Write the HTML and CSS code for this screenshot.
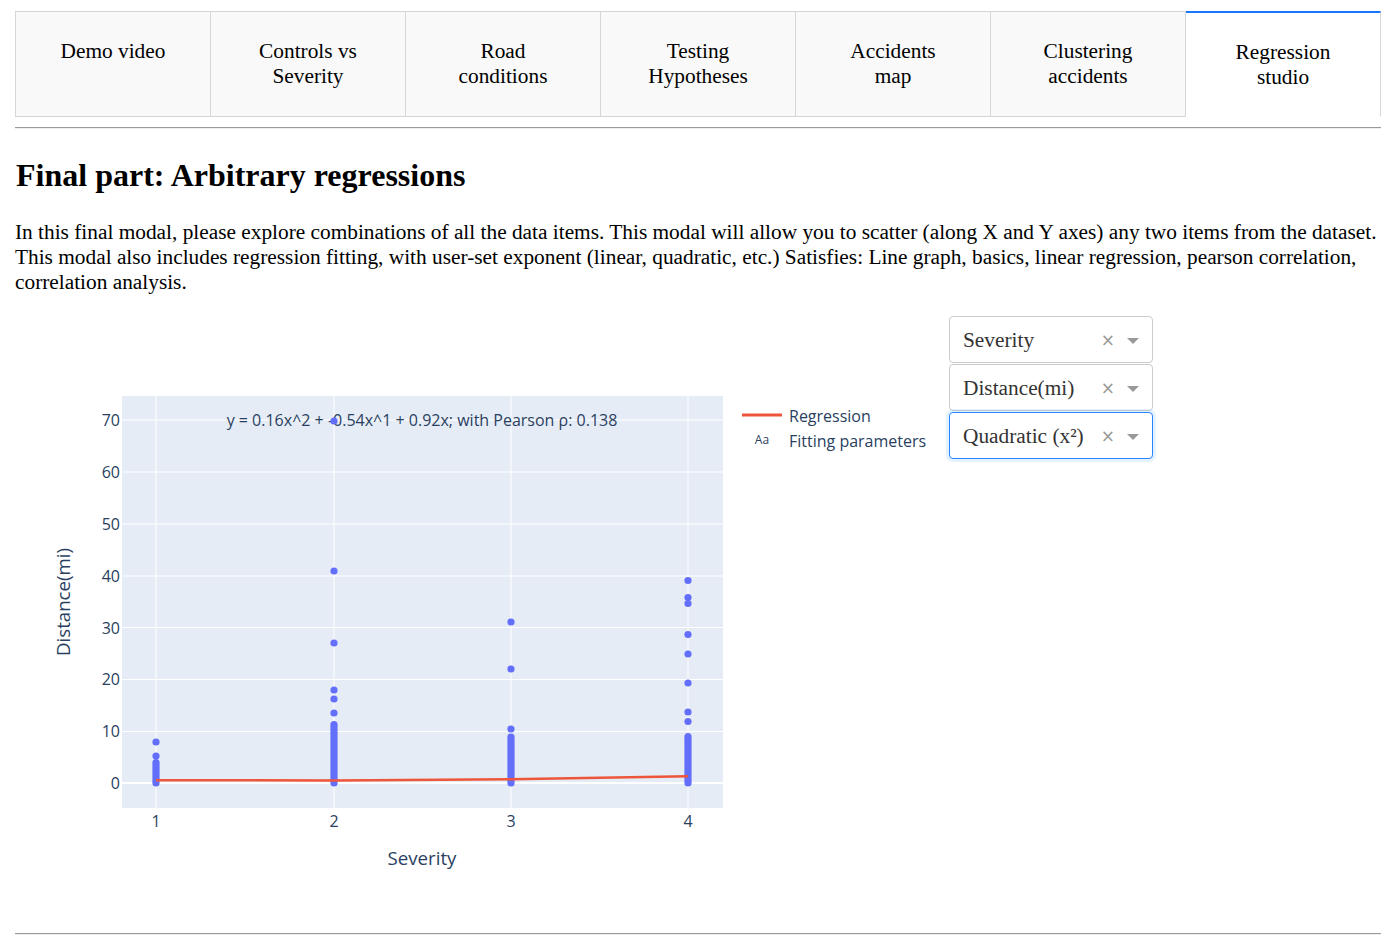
FILE: index.html
```html
<!DOCTYPE html>
<html>
<head>
<meta charset="utf-8">
<title>Regression studio</title>
<link rel="stylesheet" href="styles.css">
</head>
<body>
<div class="page">
  <div class="tabs">
    <div class="tab">Demo video</div>
    <div class="tab">Controls vs Severity</div>
    <div class="tab">Road conditions</div>
    <div class="tab">Testing Hypotheses</div>
    <div class="tab">Accidents map</div>
    <div class="tab">Clustering accidents</div>
    <div class="tab tab-selected">Regression studio</div>
  </div>
  <hr class="rule">
  <h2 class="title">Final part: Arbitrary regressions</h2>
  <p class="intro">In this final modal, please explore combinations of all the data items. This modal will allow you to scatter (along X and Y axes) any two items from the dataset. This modal also includes regression fitting, with user-set exponent (linear, quadratic, etc.) Satisfies: Line graph, basics, linear regression, pearson correlation, correlation analysis.</p>
  <div class="studio">
    <svg class="chart" width="934" height="606" viewBox="0 0 934 606" xmlns="http://www.w3.org/2000/svg">
      <rect x="107" y="80" width="601" height="412" fill="#e5ecf6"/>
      <g stroke="#ffffff" stroke-width="1">
        <line x1="107" x2="708" y1="104" y2="104"/>
        <line x1="107" x2="708" y1="156" y2="156"/>
        <line x1="107" x2="708" y1="208" y2="208"/>
        <line x1="107" x2="708" y1="260" y2="260"/>
        <line x1="107" x2="708" y1="311.5" y2="311.5"/>
        <line x1="107" x2="708" y1="363.5" y2="363.5"/>
        <line x1="107" x2="708" y1="415.5" y2="415.5"/>
        <line x1="141" x2="141" y1="80" y2="492"/>
        <line x1="319" x2="319" y1="80" y2="492"/>
        <line x1="496" x2="496" y1="80" y2="492"/>
        <line x1="673" x2="673" y1="80" y2="492"/>
      </g>
      <line x1="107" x2="708" y1="467" y2="467" stroke="#ffffff" stroke-width="2"/>
      <g class="ticks" text-anchor="end">
        <text x="105" y="104" dy="0.35em">70</text>
        <text x="105" y="156" dy="0.35em">60</text>
        <text x="105" y="208" dy="0.35em">50</text>
        <text x="105" y="260" dy="0.35em">40</text>
        <text x="105" y="312" dy="0.35em">30</text>
        <text x="105" y="363" dy="0.35em">20</text>
        <text x="105" y="415" dy="0.35em">10</text>
        <text x="105" y="467" dy="0.35em">0</text>
      </g>
      <g class="ticks" text-anchor="middle">
        <text x="141" y="505" dy="0.35em">1</text>
        <text x="319" y="505" dy="0.35em">2</text>
        <text x="496" y="505" dy="0.35em">3</text>
        <text x="673" y="505" dy="0.35em">4</text>
      </g>
      <text class="axis-title" x="407" y="542" dy="0.35em" text-anchor="middle">Severity</text>
      <text class="axis-title" x="48" y="286" dy="0.35em" text-anchor="middle" transform="rotate(-90 48 286)">Distance(mi)</text>
      <text class="annot" x="407" y="104" dy="0.35em" text-anchor="middle">y = 0.16x^2 + -0.54x^1 + 0.92x; with Pearson ρ: 0.138</text>
      <g stroke="#636efa" stroke-width="7.2" stroke-linecap="round">
        <line x1="141" x2="141" y1="446.5" y2="467"/>
        <line x1="319" x2="319" y1="408.5" y2="467"/>
        <line x1="496" x2="496" y1="421" y2="467"/>
        <line x1="673" x2="673" y1="420.5" y2="467"/>
      </g>
      <g fill="#636efa">
        <circle cx="141" cy="426" r="3.6"/>
        <circle cx="141" cy="440" r="3.6"/>
        <circle cx="319" cy="105" r="3.6"/>
        <circle cx="319" cy="255" r="3.6"/>
        <circle cx="319" cy="327" r="3.6"/>
        <circle cx="319" cy="374" r="3.6"/>
        <circle cx="319" cy="383" r="3.6"/>
        <circle cx="319" cy="397" r="3.6"/>
        <circle cx="496" cy="306" r="3.6"/>
        <circle cx="496" cy="353" r="3.6"/>
        <circle cx="496" cy="413" r="3.6"/>
        <circle cx="673" cy="264.5" r="3.6"/>
        <circle cx="673" cy="281.5" r="3.6"/>
        <circle cx="673" cy="287.5" r="3.6"/>
        <circle cx="673" cy="318.5" r="3.6"/>
        <circle cx="673" cy="338" r="3.6"/>
        <circle cx="673" cy="367" r="3.6"/>
        <circle cx="673" cy="396" r="3.6"/>
        <circle cx="673" cy="405.5" r="3.6"/>
      </g>
      <polyline points="141,464.2 319,464.5 496,463.2 673,460.2" fill="none" stroke="#ef553b" stroke-width="2.5"/>
      <line x1="727" x2="767" y1="99" y2="99" stroke="#ef553b" stroke-width="3"/>
      <text class="legend" x="774" y="100" dy="0.35em">Regression</text>
      <text class="legend-aa" x="747" y="124" dy="0.35em" text-anchor="middle">Aa</text>
      <text class="legend" x="774" y="125" dy="0.35em">Fitting parameters</text>
    </svg>
    <div class="controls">
      <div class="select">
        <span class="select-value">Severity</span>
        <span class="select-clear">×</span>
        <span class="select-arrow"></span>
      </div>
      <div class="select">
        <span class="select-value">Distance(mi)</span>
        <span class="select-clear">×</span>
        <span class="select-arrow"></span>
      </div>
      <div class="select select-focused">
        <span class="select-value">Quadratic (x²)</span>
        <span class="select-clear">×</span>
        <span class="select-arrow"></span>
      </div>
    </div>
  </div>
  <hr class="rule rule-bottom">
</div>
</body>
</html>
```

FILE: styles.css
```css
html, body {
  margin: 0;
  padding: 0;
  background: #ffffff;
}

.page {
  padding: 11px 15px 0;
  font-family: "Liberation Serif", "Times New Roman", serif;
  font-size: 21.34px;
  line-height: 25px;
  color: #000000;
}

.tabs {
  display: flex;
}

.tab {
  flex: 1 1 0;
  box-sizing: border-box;
  padding: 27px 35px 26px;
  text-align: center;
  background: #f9f9f9;
  border: 1px solid #d6d6d6;
  border-left: none;
  min-height: 106px;
}

.tab:first-child {
  border-left: 1px solid #d6d6d6;
}

.tab-selected {
  background: #ffffff;
  border-top: 2px solid #1975fa;
  border-bottom: 1px solid #ffffff;
}

.rule {
  margin: 10px 0 0;
  border: 0;
  border-top: 1px solid #9a9a9a;
  border-bottom: 1px solid #eeeeee;
  height: 0;
}

.title {
  font-size: 32px;
  line-height: 36px;
  font-weight: bold;
  margin: 28px 0 0 1px;
}

.intro {
  margin: 27px 0 0;
}

.studio {
  display: flex;
  align-items: flex-start;
  margin-top: 21px;
}

.chart {
  display: block;
  flex: none;
  font-family: "Open Sans", "DejaVu Sans", sans-serif;
}

.ticks {
  font-size: 16px;
  fill: #2a3f5f;
}

.axis-title {
  font-size: 18.67px;
  fill: #2a3f5f;
}

.annot {
  font-size: 16px;
  fill: #2a3f5f;
}

.legend {
  font-size: 16px;
  fill: #2a3f5f;
}

.legend-aa {
  font-size: 12px;
  fill: #2a3f5f;
}

.controls {
  width: 204px;
  display: flex;
  flex-direction: column;
  gap: 1px;
}

.select {
  box-sizing: border-box;
  height: 47px;
  display: flex;
  align-items: center;
  padding: 2px 13px 0 13px;
  border: 1px solid #cccccc;
  border-radius: 4px;
  background: #ffffff;
  color: #333333;
}

.select-focused {
  border-color: #2684ff;
  box-shadow: 0 0 0 3px rgba(0, 126, 255, 0.1);
}

.select-value {
  flex: 1 1 auto;
  white-space: nowrap;
}

.select-clear {
  font-family: "DejaVu Sans", sans-serif;
  font-size: 17px;
  color: #999999;
  margin-right: 12px;
}

.select-arrow {
  width: 0;
  height: 0;
  border-style: solid;
  border-width: 6px 6.5px 0;
  border-color: #999999 transparent transparent;
}

.rule-bottom {
  margin-top: 11px;
}
```
